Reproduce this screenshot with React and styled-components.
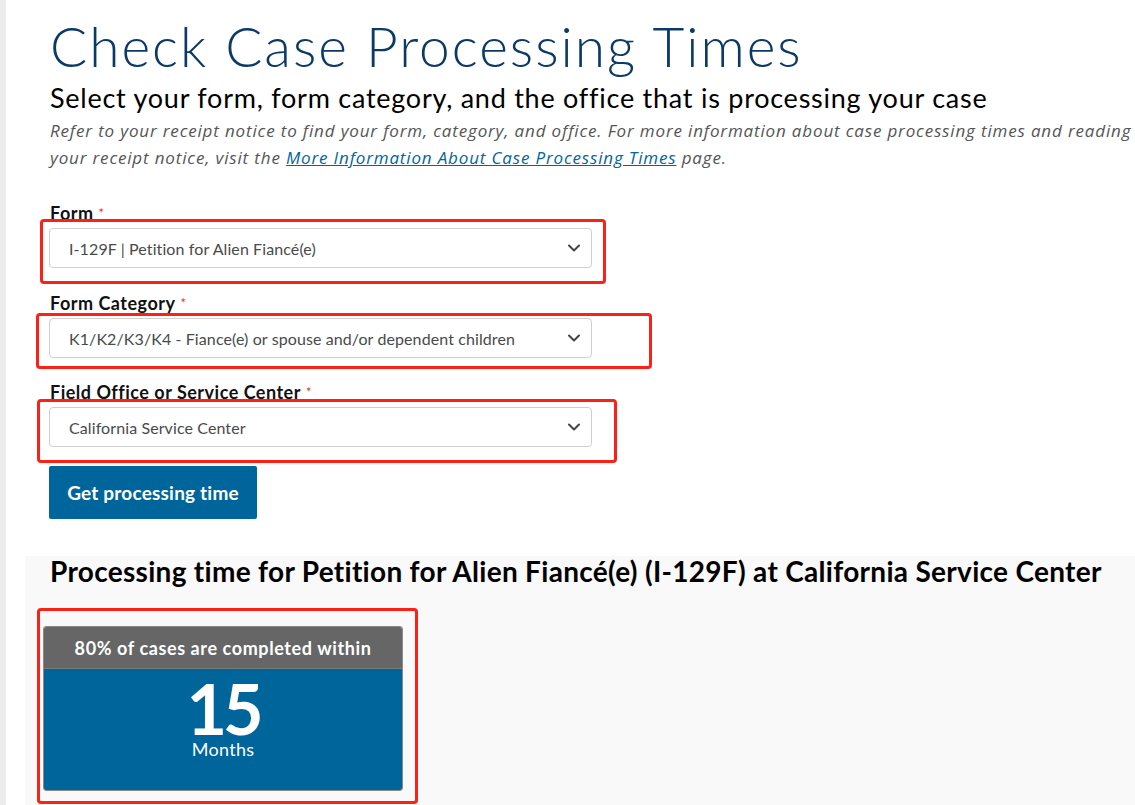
import React from "react";
import styled, { createGlobalStyle } from "styled-components";

const Global = createGlobalStyle`
  html, body { margin: 0; padding: 0; background: #fff; }
  body { font-family: Lato, "Open Sans", sans-serif; color: #000; }
`;

const Page = styled.div`
  position: relative;
  display: flex;
  min-height: 805px;
  overflow: hidden;
`;

const Strip = styled.div`
  width: 6px;
  flex: none;
  background: #ececec;
`;

const Main = styled.main`
  flex: 1;
  display: flex;
  flex-direction: column;
  padding-left: 19px;
  min-width: 0;
`;

const Intro = styled.section`
  padding: 14px 0 0 25px;
`;

const Title = styled.h1`
  margin: 0;
  font-family: Lato, sans-serif;
  font-weight: 300;
  font-size: 55px;
  line-height: 64px;
  color: #0c3a66;
  letter-spacing: 2px;
`;

const Subtitle = styled.h2`
  margin: 4px 0 0;
  font-weight: 400;
  font-size: 27px;
  line-height: 32px;
  letter-spacing: 0.75px;
  color: #000;
`;

const Note = styled.p`
  margin: 3px 0 0;
  width: 1095px;
  font-family: "Open Sans", sans-serif;
  font-style: italic;
  font-size: 17px;
  line-height: 27px;
  letter-spacing: 0.84px;
  color: #555;
`;

const Link = styled.a`
  color: #00659a;
  text-decoration: underline;
`;

const Form = styled.form`
  margin-top: 31px;
  display: flex;
  flex-direction: column;
`;

const Field = styled.div`
  display: flex;
  flex-direction: column;
  margin-bottom: ${(p) => p.$mb}px;
`;

const Label = styled.label`
  font-weight: 700;
  font-size: 18px;
  line-height: 22px;
  letter-spacing: 0.5px;
  margin-bottom: 4px;
  color: #111;
`;

const Req = styled.span`
  color: #e2312b;
  font-weight: 400;
  font-size: 13px;
  vertical-align: top;
  margin-left: 5px;
`;

const Select = styled.div`
  box-sizing: border-box;
  width: 543px;
  height: 40px;
  margin-left: -1px;
  border: 1px solid #cfcfcf;
  border-radius: 4px;
  background: #fff;
  display: flex;
  align-items: center;
  justify-content: space-between;
  padding: 0 10px 0 19px;
  font-size: 16px;
  letter-spacing: 0.1px;
  color: #4a4a4a;
`;

const Button = styled.button`
  align-self: flex-start;
  margin-left: -1px;
  width: 208px;
  height: 53px;
  border: none;
  border-radius: 2px;
  background: #00659a;
  color: #fff;
  font-family: Lato, sans-serif;
  font-weight: 700;
  font-size: 19px;
  letter-spacing: 0.2px;
`;

const Results = styled.section`
  margin-top: 37px;
  flex: 1;
  background: #f9f9f9;
  padding: 0 0 12px 25px;
`;

const ResultTitle = styled.h3`
  margin: 0;
  font-weight: 700;
  font-size: 28px;
  line-height: 30px;
  letter-spacing: 0.3px;
  color: #000;
  white-space: nowrap;
`;

const Card = styled.div`
  margin: 40px 0 0 -7px;
  width: 360px;
  box-sizing: border-box;
  border: 1px solid #8a8a8a;
  border-radius: 3px;
  overflow: hidden;
`;

const CardHead = styled.div`
  height: 41px;
  background: #666;
  color: #fff;
  font-weight: 700;
  font-size: 18px;
  letter-spacing: 0.6px;
  display: flex;
  align-items: center;
  justify-content: center;
  border-bottom: 1px solid #7a7a7a;
`;

const CardBody = styled.div`
  height: 121px;
  background: #00659a;
  color: #fff;
  display: flex;
  flex-direction: column;
  align-items: center;
  padding-top: 8px;
  box-sizing: border-box;
`;

const Big = styled.div`
  font-weight: 700;
  font-size: 70px;
  line-height: 62px;
  letter-spacing: -4px;
`;

const Unit = styled.div`
  font-size: 18px;
  line-height: 20px;
  letter-spacing: 0.3px;
`;

const Mark = styled.div`
  position: absolute;
  box-sizing: border-box;
  border: 3px solid #fb2116;
  border-radius: 4px;
  pointer-events: none;
`;

const Chevron = () => (
  <svg width="14" height="10" viewBox="0 0 14 10" fill="none">
    <path d="M2 2.5 L7 7.5 L12 2.5" stroke="#444" strokeWidth="2" strokeLinecap="round" strokeLinejoin="round" />
  </svg>
);

const fields = [
  { label: "Form", value: "I-129F | Petition for Alien Fiancé(e)", mb: 24 },
  { label: "Form Category", value: "K1/K2/K3/K4 - Fiance(e) or spouse and/or dependent children", mb: 23 },
  { label: "Field Office or Service Center", value: "California Service Center", mb: 19 },
];

const marks = [
  { l: 40, t: 219, w: 566, h: 65 },
  { l: 36, t: 313, w: 616, h: 56 },
  { l: 37, t: 399, w: 580, h: 64 },
  { l: 37, t: 608, w: 381, h: 196 },
];

export default function App() {
  return (
    <Page>
      <Global />
      <Strip />
      <Main>
        <Intro>
          <Title>Check Case Processing Times</Title>
          <Subtitle>Select your form, form category, and the office that is processing your case</Subtitle>
          <Note>
            Refer to your receipt notice to find your form, category, and office. For more information about case
            processing times and reading your receipt notice, visit the{" "}
            <Link href="#">More Information About Case Processing Times</Link> page.
          </Note>
          <Form onSubmit={(e) => e.preventDefault()}>
            {fields.map((f) => (
              <Field key={f.label} $mb={f.mb}>
                <Label>
                  {f.label}
                  <Req>*</Req>
                </Label>
                <Select>
                  <span>{f.value}</span>
                  <Chevron />
                </Select>
              </Field>
            ))}
            <Button type="submit">Get processing time</Button>
          </Form>
        </Intro>
        <Results>
          <ResultTitle>Processing time for Petition for Alien Fiancé(e) (I-129F) at California Service Center</ResultTitle>
          <Card>
            <CardHead>80% of cases are completed within</CardHead>
            <CardBody>
              <Big>15</Big>
              <Unit>Months</Unit>
            </CardBody>
          </Card>
        </Results>
      </Main>
      {marks.map((m, i) => (
        <Mark key={i} style={{ left: m.l, top: m.t, width: m.w, height: m.h }} />
      ))}
    </Page>
  );
}
